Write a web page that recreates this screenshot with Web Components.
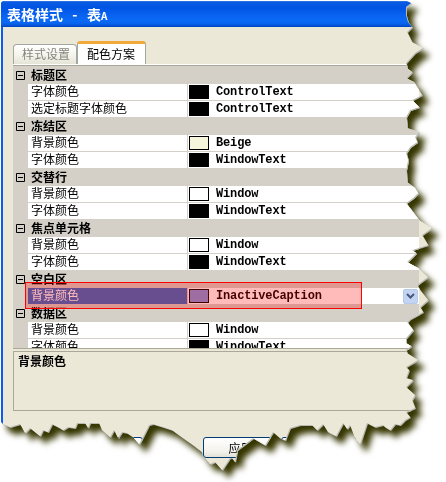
<!DOCTYPE html>
<html>
<head>
<meta charset="utf-8">
<title>表格样式</title>
<style>
  html, body { margin: 0; background: #fff; }
  body { font: 12px "Noto Sans CJK SC", sans-serif; color: #000; }
  .tiny { font-size: 10px; }
</style>
</head>
<body>
<torn-window>
  <span slot="heading">表格样式  -  表<span class="tiny">A</span></span>
  <xp-tabs>
    <xp-tab style="width:64px">样式设置</xp-tab>
    <xp-tab active style="width:69px">配色方案</xp-tab>
  </xp-tabs>
  <pg-grid>
    <pg-group>标题区</pg-group>
    <pg-row color="#000" value="ControlText">字体颜色</pg-row>
    <pg-row color="#000" value="ControlText">选定标题字体颜色</pg-row>
    <pg-group>冻结区</pg-group>
    <pg-row color="#f5f5dc" value="Beige">背景颜色</pg-row>
    <pg-row color="#000" value="WindowText">字体颜色</pg-row>
    <pg-group>交替行</pg-group>
    <pg-row color="#fff" value="Window">背景颜色</pg-row>
    <pg-row color="#000" value="WindowText">字体颜色</pg-row>
    <pg-group>焦点单元格</pg-group>
    <pg-row color="#fff" value="Window">背景颜色</pg-row>
    <pg-row color="#000" value="WindowText">字体颜色</pg-row>
    <pg-group>空白区</pg-group>
    <pg-row color="#7a96df" value="InactiveCaption" selected>背景颜色</pg-row>
    <pg-group>数据区</pg-group>
    <pg-row color="#fff" value="Window">背景颜色</pg-row>
    <pg-row color="#000" value="WindowText">字体颜色</pg-row>
  </pg-grid>
  <help-box>背景颜色</help-box>
  <button-row>
    <xp-button></xp-button>
    <xp-button class="apply">应用</xp-button>
    <xp-button>取消</xp-button>
  </button-row>
</torn-window>

<script>
// outline of the torn screenshot edge, clockwise from the top left
const TORN_EDGE = [
  [3,1],[407,1],[411,3],[406,7],[406,15],[408,22],[412,27],[407,32],[412,42],[423,48],[415,53],[406,63],
  [407,68],[412,72],[406,78],[414,82],[417,87],[422,95],[412,100],[419,107],[410,110],[406,117],[407,125],
  [407,128],[419,132],[415,137],[417,142],[410,147],[406,153],[408,160],[406,170],[407,182],[415,188],
  [418,193],[413,198],[406,203],[413,212],[419,220],[432,228],[422,235],[428,245],[412,250],[416,253],
  [407,262],[418,268],[428,277],[417,285],[420,290],[428,300],[420,307],[423,312],[410,319],[407,322],
  [413,330],[406,338],[406,343],[411,346],[406,350],[407,353],[418,360],[406,367],[409,370],[406,378],
  [413,380],[406,387],[415,395],[412,400],[415,408],[406,412],[410,417],[405,420],[400,425],[395,424],
  [390,430],[385,427],[383,425],[375,427],[367,423],[360,444],[355,438],[350,425],[347,429],[343,423],
  [336,436],[328,432],[323,424],[317,430],[312,425],[305,425],[300,425],[290,428],[285,440],[280,438],
  [273,432],[265,445],[253,438],[237,450],[235,462],[232,458],[230,458],[222,470],[215,462],[210,464],
  [205,458],[203,457],[202,452],[193,445],[183,438],[172,430],[163,427],[153,424],[149,425],[143,437],
  [139,444],[133,437],[127,433],[122,432],[118,438],[114,430],[110,437],[102,430],[99,423],[90,423],
  [88,428],[85,423],[77,423],[75,428],[68,427],[63,430],[58,427],[52,424],[48,432],[43,430],[40,436],
  [30,428],[25,433],[20,424],[10,427],[3,424],[1,422],[1,3]
];

class TornWindow extends HTMLElement {
  constructor() {
    super();
    this.shadowDOM = this.attachShadow({ mode: "open" });
  }
  connectedCallback() {
    const outline = TORN_EDGE.map(p => p[0] + "px " + p[1] + "px").join(",");
    this.shadowDOM.innerHTML = `<style>
      :host {
        display: block;
        width: 446px;
        height: 482px;
        filter: drop-shadow(1px 1px 0 #b8b8b4) drop-shadow(6px 7px 3px #353500);
      }
      .sheet {
        height: 100%;
        background: linear-gradient(90deg, #0a5cf0 3px, #ebe8d8 3px);
        clip-path: polygon(${outline});
      }
      .title {
        height: 27px;
        padding-left: 7px;
        display: flex;
        align-items: center;
        box-sizing: border-box;
        color: #fff;
        font-size: 14px;
        font-weight: bold;
        white-space: pre;
        word-spacing: 1.5px;
        background: linear-gradient(#7da6ea 0, #0a5be2 2px, #0054e3 8px, #0860ee 14px, #0a6af5 21px, #0a62ea 24px, #0045c0 27px);
      }
      .body {
        padding: 14px 27px 0 13px;
      }
    </style>
    <div class="sheet">
      <div class="title"><slot name="heading"></slot></div>
      <div class="body"><slot></slot></div>
    </div>`;
  }
}
customElements.define("torn-window", TornWindow);

class XpTabs extends HTMLElement {
  constructor() {
    super();
    this.attachShadow({ mode: "open" }).innerHTML = `<style>
      :host {
        display: flex;
        align-items: flex-end;
        height: 23px;
        border-bottom: 1px solid #fff;
      }
    </style><slot></slot>`;
  }
}
customElements.define("xp-tabs", XpTabs);

class XpTab extends HTMLElement {
  constructor() {
    super();
    this.attachShadow({ mode: "open" }).innerHTML = `<style>
      :host {
        display: block;
        box-sizing: border-box;
        height: 20px;
        line-height: 17px;
        padding-left: 8px;
        color: #85857c;
        border: 1px solid #a3a89f;
        border-bottom: 0;
        border-radius: 4px 4px 0 0;
        background: linear-gradient(#fff, #f3f2ea 60%, #e6e4d6);
      }
      :host([active]) {
        height: 23px;
        line-height: 19px;
        padding-left: 9px;
        color: #000;
        background: #fff;
        border-top: 3px solid #f2a93a;
        border-radius: 3px 3px 0 0;
      }
    </style><slot></slot>`;
  }
}
customElements.define("xp-tab", XpTab);

class PgGrid extends HTMLElement {
  constructor() {
    super();
    this.attachShadow({ mode: "open" }).innerHTML = `<style>
      :host {
        display: block;
        box-sizing: border-box;
        height: 284px;
        padding-top: 1px;
        overflow: hidden;
        background: #d4d0c8;
        border-top: 1px solid #aca899;
        border-bottom: 1px solid #aca899;
      }
    </style><slot></slot>`;
  }
}
customElements.define("pg-grid", PgGrid);

class PgGroup extends HTMLElement {
  constructor() {
    super();
    this.attachShadow({ mode: "open" }).innerHTML = `<style>
      :host {
        display: flex;
        align-items: center;
        height: 17px;
        font-weight: bold;
        line-height: 15px;
      }
      svg { margin: 0 6px 0 3px; flex: none; }
      slot { display: block; margin-top: -2px; }
    </style>
    <svg width="9" height="9" viewBox="0 0 9 9">
      <path d="M.5.5h8v8h-8zM2 4.5h5" fill="none" stroke="#000"/>
    </svg>
    <slot></slot>`;
  }
}
customElements.define("pg-group", PgGroup);

class PgRow extends HTMLElement {
  constructor() {
    super();
    this.attachShadow({ mode: "open" });
  }
  connectedCallback() {
    const selected = this.hasAttribute("selected");
    this.shadowDOM = this.shadowRoot;
    this.shadowDOM.innerHTML = `<style>
      :host {
        display: grid;
        grid-template-columns: 15px 160px 1fr;
        height: 17px;
        position: relative;
      }
      :host([selected]) { z-index: 1; }
      :host([selected])::after {
        content: "";
        position: absolute;
        left: 12px;
        top: -6px;
        width: 337px;
        height: 27px;
        box-sizing: border-box;
        border: 1px solid #f00;
        background: rgba(255, 0, 0, 0.27);
      }
      .label, .value {
        background: #fff;
        border-bottom: 1px solid #d4d0c8;
        height: 16px;
      }
      .label {
        grid-column: 2;
        padding-left: 3px;
        line-height: 14px;
        border-right: 1px solid #d4d0c8;
        overflow: hidden;
      }
      :host([selected]) .label { background: #316ac5; color: #fff; }
      .value {
        display: flex;
        align-items: center;
        padding-left: 1px;
        font: bold 12px/16px "Liberation Mono", monospace;
        letter-spacing: -0.15px;
      }
      .swatch {
        width: 20px;
        height: 14px;
        margin-right: 7px;
        box-sizing: border-box;
        border: 1px solid #000;
        background: ${this.getAttribute("color")};
      }
      .drop {
        margin-left: auto;
        margin-right: 1px;
        width: 15px;
        height: 15px;
        box-sizing: border-box;
        border: 1px solid #b7c9ea;
        border-radius: 2px;
        background: #c3d3f2;
        display: flex;
        align-items: center;
        justify-content: center;
      }
    </style>
    <div class="label"><slot></slot></div>
    <div class="value">
      <span class="swatch"></span><span>${this.getAttribute("value")}</span>
      ${selected ? `<span class="drop"><svg width="9" height="6" viewBox="0 0 9 6"><path d="M1 1l3.500 3.500L8 1" fill="none" stroke="#45597f" stroke-width="2"/></svg></span>` : ""}
    </div>`;
  }
}
customElements.define("pg-row", PgRow);

class HelpBox extends HTMLElement {
  constructor() {
    super();
    this.attachShadow({ mode: "open" }).innerHTML = `<style>
      :host {
        display: block;
        box-sizing: border-box;
        height: 60px;
        margin-top: 2px;
        padding: 1px 4px;
        border: 1px solid #aca899;
        font-weight: bold;
        line-height: 16px;
      }
    </style><slot></slot>`;
  }
}
customElements.define("help-box", HelpBox);

class ButtonRow extends HTMLElement {
  constructor() {
    super();
    this.attachShadow({ mode: "open" }).innerHTML = `<style>
      :host {
        display: flex;
        gap: 3px;
        margin: 26px 0 0 55px;
      }
      ::slotted(.apply) { margin-left: 57px; }
    </style><slot></slot>`;
  }
}
customElements.define("button-row", ButtonRow);

class XpButton extends HTMLElement {
  constructor() {
    super();
    this.attachShadow({ mode: "open" }).innerHTML = `<style>
      :host {
        display: block;
        box-sizing: border-box;
        width: 75px;
        height: 21px;
        line-height: 19px;
        text-align: center;
        border: 1px solid #003c74;
        border-radius: 3px;
        background: linear-gradient(#fff, #f3f2ec 70%, #e3e2d8);
      }
    </style><slot></slot>`;
  }
}
customElements.define("xp-button", XpButton);
</script>
</body>
</html>
